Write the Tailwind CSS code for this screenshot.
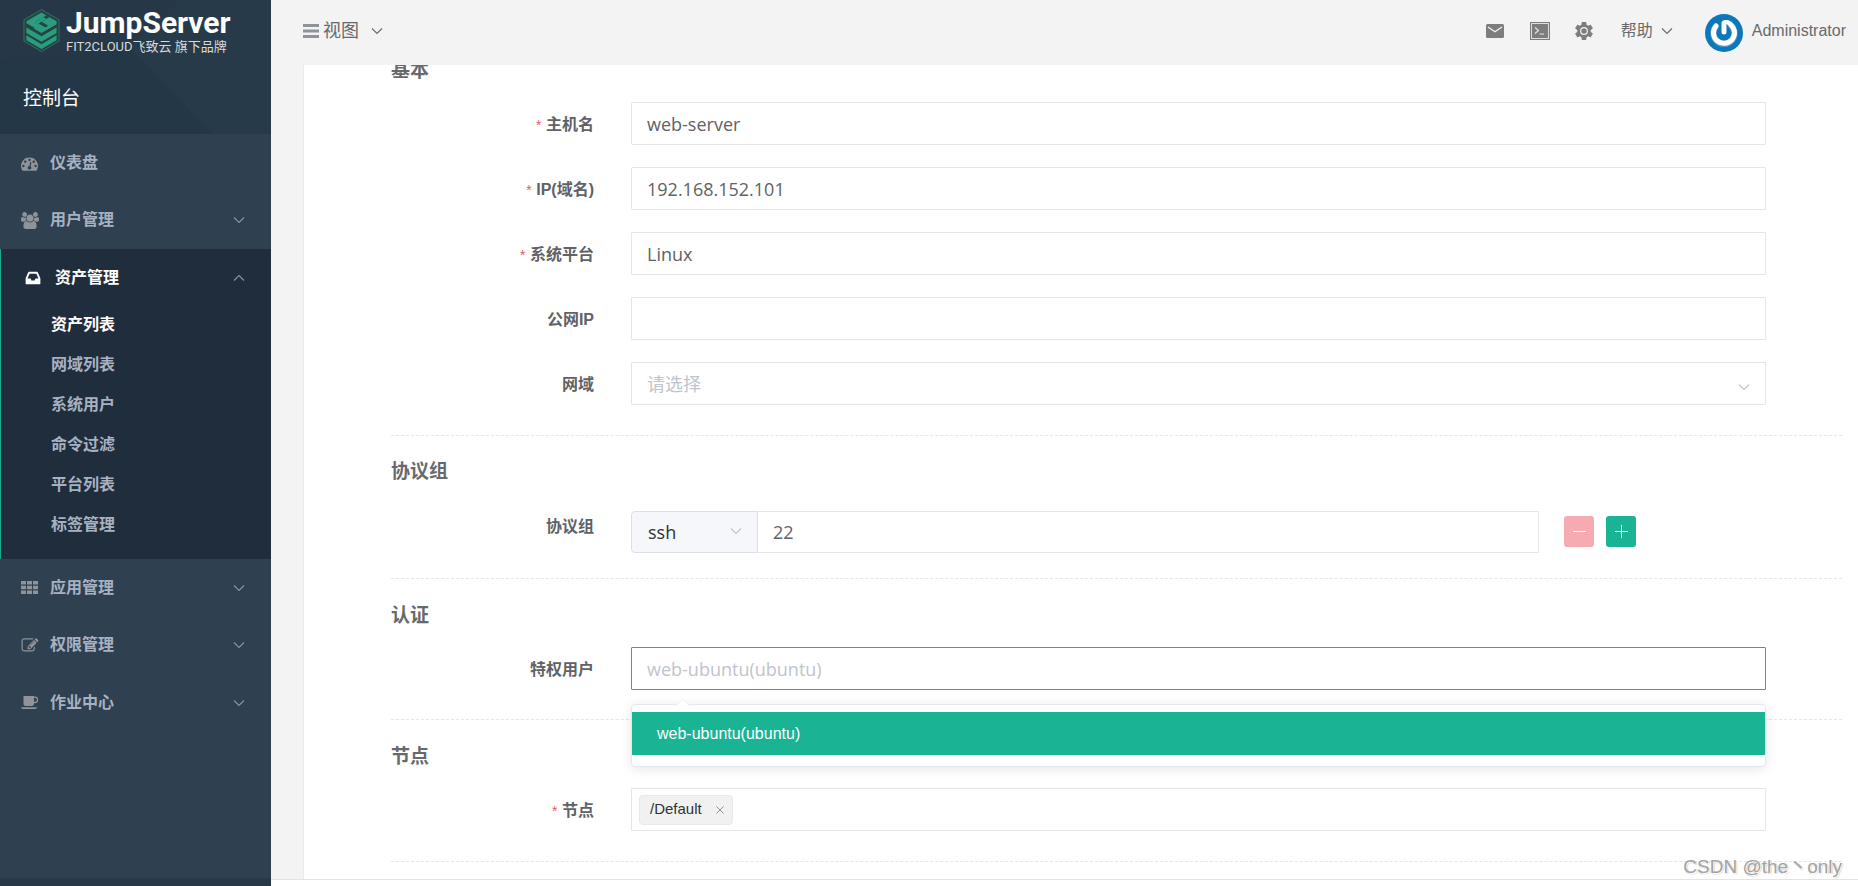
<!DOCTYPE html>
<html lang="zh-CN">
<head>
<meta charset="utf-8">
<title>JumpServer</title>
<script src="https://cdn.jsdelivr.net/npm/@tailwindcss/browser@4"></script>
</head>
<body class="flex h-screen overflow-hidden bg-[#f3f3f3] font-['Liberation_Sans','Noto_Sans_CJK_SC',sans-serif] text-base text-[#606266]">

<svg class="hidden" aria-hidden="true">
  <symbol id="down" viewBox="0 0 12 8"><path d="M1 1.5 6 6.5 11 1.5" fill="none" stroke="currentColor" stroke-width="1.1"/></symbol>
  <symbol id="up" viewBox="0 0 12 8"><path d="M1 6.5 6 1.5 11 6.5" fill="none" stroke="currentColor" stroke-width="1.1"/></symbol>
</svg>

<aside class="flex w-[271px] shrink-0 flex-col bg-[#2f4050]">
  <div class="relative h-[134px] overflow-hidden bg-[#263848] pl-[23px]">
    <svg class="absolute inset-0 h-full w-full" viewBox="0 0 271 134" preserveAspectRatio="none" aria-hidden="true">
      <path d="M130 48 212 134H271V0H180z" fill="#273a4a"/><path d="M0 60 130 48 212 134H0z" fill="#243747"/>
    </svg>
    <div class="relative flex gap-[6px] pt-2">
      <svg class="h-[45px] w-[37px] shrink-0" viewBox="0 0 38 45" aria-hidden="true">
        <path d="M19 1 37 11.500V33.500L19 44 1 33.500V11.500z" fill="#25443f" stroke="#2b7566" stroke-width="1"/>
        <path d="M3.500 13 19 4 24 7 12 14 19 18 14 21 3.500 15z" fill="#2a9c80"/>
        <path d="M24 7 34.500 13V16L19 25 11 20.500 14 18.500 19 21.500 26 17.500 19 13.500 27 9z" fill="#2a9c80"/>
        <path d="M12 14 21 9 24 10.500 16 15.200 24 20 19 23 13 19.500 17 17z" fill="#2a9c80"/>
        <path d="M3.500 19.500V25L19 34 34.500 25V19.500L19 28.500z" fill="#2a9c80"/>
        <path d="M3.500 27.500V32.500L19 41.500 34.500 32.500V27.500L19 36.500z" fill="#2a9c80"/>
      </svg>
      <div class="text-white">
        <div class="h-[29px] font-[Roboto] text-[30px] leading-[29px] font-bold">JumpServer</div>
        <div class="whitespace-nowrap font-['Roboto','Noto_Sans_CJK_SC',sans-serif] text-[13px] leading-[19px] text-[#d5dade]">FIT2CLOUD飞致云 旗下品牌</div>
      </div>
    </div>
    <h1 class="relative pt-[27px] font-['Noto_Sans_CJK_SC'] text-[19px] leading-7 text-white">控制台</h1>
  </div>

  <nav class="flex flex-1 flex-col font-bold text-[#a7b1c2]">
    <a href="#" class="flex h-[57px] items-center pt-px pl-[21px]">
      <svg class="h-[17px] w-[17px] text-[#909399]" viewBox="0 0 1792 1792" fill="currentColor"><path d="M384 1152q0-53-37.500-90.500t-90.500-37.500-90.500 37.500-37.500 90.500 37.500 90.500 90.500 37.500 90.500-37.500 37.500-90.500zm192-448q0-53-37.500-90.500t-90.500-37.500-90.500 37.500-37.500 90.500 37.500 90.500 90.500 37.500 90.500-37.500 37.500-90.500zm428 481l101-382q6-26-7.500-48.500t-38.500-29.500-48 6.500-30 39.500l-101 382q-60 5-107 43.500t-63 98.500q-20 77 20 146t117 89 146-20 89-117q16-60-6-117t-72-91zm660-33q0-53-37.500-90.500t-90.500-37.500-90.500 37.500-37.500 90.500 37.500 90.500 90.500 37.500 90.500-37.500 37.500-90.500zm-640-640q0-53-37.500-90.500t-90.500-37.500-90.500 37.500-37.500 90.500 37.500 90.500 90.500 37.500 90.500-37.500 37.500-90.500zm448 192q0-53-37.500-90.500t-90.500-37.500-90.500 37.500-37.500 90.500 37.500 90.500 90.500 37.500 90.500-37.500 37.500-90.500zm320 448q0 261-141 483-19 29-54 29h-1402q-35 0-54-29-141-221-141-483 0-182 71-348t191-286 286-191 348-71 348 71 286 191 191 286 71 348z"/></svg>
      <span class="ml-3">仪表盘</span>
    </a>
    <button type="button" class="flex h-[58px] items-center pr-[26px] pl-[21px]">
      <svg class="h-[17px] w-[18px] text-[#909399]" viewBox="0 0 1920 1792" fill="currentColor"><path d="M593 896q-162 5-265 128h-134q-82 0-138-40.500t-56-118.500q0-353 124-353 6 0 43.500 21t97.500 42.500 119 21.500q67 0 133-23-5 37-5 66 0 139 81 256zm1071 637q0 120-73 189.500t-194 69.500h-874q-121 0-194-69.500t-73-189.500q0-53 3.500-103.500t14-109 26.500-108.500 43-97.500 62-81 85.500-53.500 111.500-20q10 0 43 21.500t73 48 107 48 135 21.500 135-21.500 107-48 73-48 43-21.500q61 0 111.500 20t85.500 53.500 62 81 43 97.500 26.500 108.500 14 109 3.500 103.500zm-1024-1277q0 106-75 181t-181 75-181-75-75-181 75-181 181-75 181 75 75 181zm704 384q0 159-112.500 271.500t-271.500 112.500-271.500-112.500-112.500-271.500 112.500-271.500 271.500-112.500 271.500 112.500 112.500 271.500zm576 225q0 78-56 118.500t-138 40.500h-134q-103-123-265-128 81-117 81-256 0-29-5-66 66 23 133 23 59 0 119-21.500t97.500-42.500 43.500-21q124 0 124 353zm-128-609q0 106-75 181t-181 75-181-75-75-181 75-181 181-75 181 75 75 181z"/></svg>
      <span class="ml-[11px]">用户管理</span>
      <svg class="ml-auto h-2 w-3 text-[#909399]"><use href="#down"/></svg>
    </button>

    <div class="border-l border-[#19aa8d] bg-[#202d3d] pb-[14px]">
      <button type="button" class="flex h-14 w-full items-center pt-px pr-[26px] pl-6 text-white">
        <svg class="h-4 w-4" viewBox="-64 128 1664 1536" fill="currentColor"><path d="M1023 960h316q-1-3-2.500-8.500t-2.500-7.500l-212-496h-708l-212 496q-1 3-2.500 8.500t-2.500 7.500h316l95 192h320zm513 30v482q0 26-19 45t-45 19h-1408q-26 0-45-19t-19-45v-482q0-62 25-123l238-552q10-25 36.500-42t52.500-17h832q26 0 52.500 17t36.500 42l238 552q25 61 25 123z"/></svg>
        <span class="ml-[14px]">资产管理</span>
        <svg class="ml-auto h-2 w-3 text-[#909399]"><use href="#up"/></svg>
      </button>
      <ul class="pl-[50px] leading-10">
        <li><a href="#" class="block text-white">资产列表</a></li>
        <li><a href="#" class="block">网域列表</a></li>
        <li><a href="#" class="block">系统用户</a></li>
        <li><a href="#" class="block">命令过滤</a></li>
        <li><a href="#" class="block">平台列表</a></li>
        <li><a href="#" class="block">标签管理</a></li>
      </ul>
    </div>

    <button type="button" class="flex h-[57px] items-center pr-[26px] pl-[21px]">
      <svg class="h-[15px] w-[18px] text-[#909399]" viewBox="0 0 18 15" fill="currentColor"><path d="M0 1h5v3.500H0zM6 1h5v3.500H6zM12 1H17v3.500h-5zM0 5.700h5v3.600H0zM6 5.700h5v3.600H6zM12 5.700H17v3.600h-5zM0 10.500h5V14H0zM6 10.500h5V14H6zM12 10.500H17V14h-5z"/></svg>
      <span class="ml-[11px]">应用管理</span>
      <svg class="ml-auto h-2 w-3 text-[#909399]"><use href="#down"/></svg>
    </button>
    <button type="button" class="flex h-[58px] items-center pr-[26px] pl-[21px]">
      <svg class="h-[17px] w-[18px] text-[#909399]" viewBox="0 0 1792 1792" fill="currentColor"><path d="M888 1184l116-116-152-152-116 116v56h96v96h56zm440-720q-16-16-33 1l-350 350q-17 17-1 33t33-1l350-350q17-17 1-33zm80 594v190q0 119-84.500 203.500t-203.500 84.500h-832q-119 0-203.500-84.500t-84.500-203.500v-832q0-119 84.500-203.500t203.500-84.500h832q63 0 117 25 15 7 18 23 3 17-9 29l-49 49q-14 14-32 8-23-6-45-6h-832q-66 0-113 47t-47 113v832q0 66 47 113t113 47h832q66 0 113-47t47-113v-126q0-13 9-22l64-64q15-15 35-7t20 29zm-96-738l288 288-672 672h-288v-288zm444 132l-92 92-288-288 92-92q28-28 68-28t68 28l152 152q28 28 28 68t-28 68z"/></svg>
      <span class="ml-[11px]">权限管理</span>
      <svg class="ml-auto h-2 w-3 text-[#909399]"><use href="#down"/></svg>
    </button>
    <button type="button" class="flex h-[57px] items-center pr-[26px] pl-[21px]">
      <svg class="h-[15px] w-[18px] text-[#909399]" viewBox="0 0 18 15"><path d="M2.500 1H13V8.500Q13 11 10.500 11H5Q2.500 11 2.500 8.500zM0 12.300H16Q16 14 14 14H2Q0 14 0 12.300z" fill="currentColor"/><path d="M12.800 2.200H14Q16.500 2.200 16.500 4.700 16.500 7.500 14 7.500H12.800" fill="none" stroke="currentColor" stroke-width="1.300"/></svg>
      <span class="ml-[11px]">作业中心</span>
      <svg class="ml-auto h-2 w-3 text-[#909399]"><use href="#down"/></svg>
    </button>
    <div class="mt-auto h-2 bg-[#293846]"></div>
  </nav>
</aside>

<div class="flex min-w-0 flex-1 flex-col">
  <header class="flex h-[65px] shrink-0 items-center bg-[#f3f3f3] pr-3 pb-[3px] pl-8 text-[#676a6c]">
    <button type="button" class="flex items-center">
      <svg class="h-[14px] w-4" viewBox="0 0 16 14" fill="#909399"><path d="M0 0h16v3H0zM0 5.500h16v3H0zM0 11h16v3H0z"/></svg>
      <span class="ml-1 text-[18px]">视图</span>
      <svg class="ml-3 h-2 w-3"><use href="#down"/></svg>
    </button>
    <div class="ml-auto flex items-center">
      <button type="button" aria-label="邮件"><svg class="h-[14px] w-[18px]" viewBox="0 0 18 14"><rect width="18" height="14" rx="1.500" fill="#7b7d7f"/><path d="M2 3 9 7.800 16 3" fill="none" stroke="#f3f3f3" stroke-width="1.300"/></svg></button>
      <button type="button" class="ml-[26px]" aria-label="终端"><svg class="h-[18px] w-5" viewBox="0 0 20 18"><rect width="20" height="18" fill="#7b7d7f"/><rect x="1.500" y="1.500" width="17" height="15" fill="none" stroke="#dedede"/><path d="M5 5.500 8.500 8.500 5 11.500M9.500 12H14" fill="none" stroke="#e4e4e4" stroke-width="1.200"/></svg></button>
      <button type="button" class="ml-[25px]" aria-label="设置"><svg class="h-[18px] w-[18px]" viewBox="2 2 20 20" fill="#7b7d7f"><path d="M19.430 12.980c.04-.32.07-.64.07-.98s-.03-.66-.07-.98l2.110-1.650c.19-.15.24-.42.12-.64l-2-3.460c-.12-.22-.39-.3-.61-.22l-2.490 1c-.52-.4-1.080-.73-1.690-.98l-.38-2.650C14.460 2.180 14.250 2 14 2h-4c-.25 0-.46.18-.49.42l-.38 2.650c-.61.25-1.170.59-1.690.98l-2.490-1c-.23-.09-.49 0-.61.22l-2 3.460c-.13.22-.07.49.12.64l2.110 1.650c-.04.32-.07.65-.07.98s.03.66.07.98l-2.110 1.650c-.19.15-.24.42-.12.64l2 3.460c.12.22.39.3.61.22l2.490-1c.52.4 1.080.73 1.690.98l.38 2.650c.03.24.24.42.49.42h4c.25 0 .46-.18.49-.42l.38-2.650c.61-.25 1.170-.59 1.690-.98l2.490 1c.23.09.49 0 .61-.22l2-3.460c.12-.22.07-.49-.12-.64z"/><circle cx="12" cy="12" r="3.700" fill="none" stroke="#f3f3f3" stroke-width="1.300"/></svg></button>
      <button type="button" class="ml-[28px] flex items-center"><span>帮助</span><svg class="ml-2 h-2 w-3"><use href="#down"/></svg></button>
      <a href="#" class="ml-8 flex items-center">
        <svg class="mt-1 h-[38px] w-[38px]" viewBox="0 0 38 38" aria-hidden="true"><circle cx="19" cy="19" r="19" fill="#0b78bc"/><path d="M11 12.500A10.500 10.500 0 1 0 26 11.500" fill="none" stroke="#5c93b9" stroke-width="6.500" stroke-linecap="round"/><path d="M11 12A10.500 10.500 0 1 0 26 11M19 9V18" fill="none" stroke="#fff" stroke-width="5" stroke-linecap="round"/><path d="M18.500 6H23Q26 7 28 9.500L25 12.500 21.500 10z" fill="#fff"/></svg>
        <span class="ml-[9px]">Administrator</span>
      </a>
    </div>
  </header>

  <main class="min-h-0 flex-1 overflow-hidden pl-8">
    <form class="flow-root h-full border-l border-[#e7eaec] bg-white pr-4 pl-[87px]">
      <section class="-mt-[7px] border-b border-dashed border-[#e4e6e8] pb-[30px]">
        <h2 class="text-[19px] leading-[26px] font-bold text-[#676a6c]">基本</h2>
        <div class="mt-[18px] flex flex-col gap-[22px] pr-[76px]">
          <div class="flex items-center">
            <label for="host" class="w-[203px] shrink-0 pt-[3px] text-right font-bold"><span class="text-sm font-normal text-[#ed5565]">*</span> 主机名</label>
            <input id="host" value="web-server" class="ml-[37px] h-[43px] min-w-0 flex-1 rounded-[1px] border border-[#e5e6e7] px-[15px] font-['Open_Sans'] text-[18px] outline-none">
          </div>
          <div class="flex items-center">
            <label for="ip" class="w-[203px] shrink-0 pt-[3px] text-right font-bold"><span class="text-sm font-normal text-[#ed5565]">*</span> IP(域名)</label>
            <input id="ip" value="192.168.152.101" class="ml-[37px] h-[43px] min-w-0 flex-1 rounded-[1px] border border-[#e5e6e7] px-[15px] font-['Open_Sans'] text-[18px] outline-none">
          </div>
          <div class="flex items-center">
            <label for="platform" class="w-[203px] shrink-0 pt-[3px] text-right font-bold"><span class="text-sm font-normal text-[#ed5565]">*</span> 系统平台</label>
            <input id="platform" value="Linux" class="ml-[37px] h-[43px] min-w-0 flex-1 rounded-[1px] border border-[#e5e6e7] px-[15px] font-['Open_Sans'] text-[18px] outline-none">
          </div>
          <div class="flex items-center">
            <label for="public" class="w-[203px] shrink-0 pt-[3px] text-right font-bold">公网IP</label>
            <input id="public" class="ml-[37px] h-[43px] min-w-0 flex-1 rounded-[1px] border border-[#e5e6e7] px-[15px] font-['Open_Sans'] text-[18px] outline-none">
          </div>
          <div class="flex items-center">
            <label for="domain" class="w-[203px] shrink-0 pt-[3px] text-right font-bold">网域</label>
            <div class="relative ml-[37px] min-w-0 flex-1">
              <select id="domain" class="block h-[43px] w-full appearance-none rounded-[1px] border border-[#e5e6e7] px-[15px] pt-[3px] text-[18px] text-[#c0c4cc] outline-none"><option>请选择</option></select>
              <svg class="pointer-events-none absolute top-[21px] right-4 h-2 w-3 text-[#c0c4cc]"><use href="#down"/></svg>
            </div>
          </div>
        </div>
      </section>

      <section class="border-b border-dashed border-[#e4e6e8] pt-[23px] pb-[25px]">
        <h2 class="text-[19px] leading-[26px] font-bold text-[#676a6c]">协议组</h2>
        <div class="mt-[26px] flex items-start pr-[76px]">
          <label for="port" class="w-[203px] shrink-0 pt-1 text-right font-bold">协议组</label>
          <div class="ml-[37px] flex min-w-0 flex-1 items-center">
            <div class="flex h-[42px] w-4/5">
              <div class="relative w-[127px] shrink-0">
                <select aria-label="协议" class="h-[42px] w-full appearance-none rounded-l border border-[#dcdfe6] bg-[#f5f7fa] px-4 font-['Open_Sans'] text-[18px] text-[#303133] outline-none"><option>ssh</option></select>
                <svg class="pointer-events-none absolute top-4 right-4 h-2 w-3 text-[#c0c4cc]"><use href="#down"/></svg>
              </div>
              <input id="port" value="22" class="min-w-0 flex-1 rounded-r-[1px] border border-l-0 border-[#e5e6e7] px-[15px] font-['Open_Sans'] text-[18px] outline-none">
            </div>
            <button type="button" aria-label="删除" class="mb-px ml-[25px] flex h-[31px] w-[30px] items-center justify-center rounded-[3px] bg-[#f6aab2]"><svg class="h-[13px] w-[13px]" viewBox="0 0 13 13"><path d="M0 6.500h13" stroke="#fff"/></svg></button>
            <button type="button" aria-label="添加" class="mb-px ml-3 flex h-[31px] w-[30px] items-center justify-center rounded-[3px] bg-[#1ab394]"><svg class="h-[13px] w-[13px]" viewBox="0 0 13 13"><path d="M0 6.500h13M6.500 0v13" stroke="#fff"/></svg></button>
          </div>
        </div>
      </section>

      <section class="border-b border-dashed border-[#e4e6e8] pt-[24px] pb-[29px]">
        <h2 class="text-[19px] leading-[26px] font-bold text-[#676a6c]">认证</h2>
        <div class="mt-[18px] flex items-center pr-[76px]">
          <label for="admin" class="w-[203px] shrink-0 pt-[3px] text-right font-bold">特权用户</label>
          <div class="relative ml-[37px] min-w-0 flex-1">
            <input id="admin" placeholder="web-ubuntu(ubuntu)" class="block h-[43px] w-full rounded-[1px] border border-[#1ab394] px-[15px] font-['Open_Sans'] text-[18px] outline-none placeholder:text-[#c0c4cc]">
            <div class="absolute inset-x-0 top-full z-10 mt-[14px] rounded border border-[#e4e7ed] bg-white pt-[7px] pb-[11px] shadow-[0_2px_12px_rgba(0,0,0,0.1)]" role="listbox">
              <svg class="absolute -top-[7px] left-[44px] h-2 w-[14px]" viewBox="0 0 14 8" aria-hidden="true"><path d="M0 8 7 1 14 8" fill="#fff" stroke="#ebeef5"/></svg>
              <div role="option" aria-selected="true" class="h-[43px] bg-[#1ab394] px-[25px] leading-[43px] text-white">web-ubuntu(ubuntu)</div>
            </div>
          </div>
        </div>
      </section>

      <section class="border-b border-dashed border-[#e4e6e8] pt-[24px] pb-[30px]">
        <h2 class="text-[19px] leading-[26px] font-bold text-[#676a6c]">节点</h2>
        <div class="mt-[18px] flex items-center pr-[76px]">
          <label for="node" class="w-[203px] shrink-0 pt-[3px] text-right font-bold"><span class="text-sm font-normal text-[#ed5565]">*</span> 节点</label>
          <div class="ml-[37px] flex h-[43px] min-w-0 flex-1 items-center rounded-[1px] border border-[#e5e6e7] pl-[7px]">
            <span class="flex h-[30px] items-center rounded border border-[#e7eaec] bg-[#f1f1f1] pr-2 pl-[10px] text-[15px] text-[#303133]">/Default
              <button type="button" aria-label="移除" class="ml-[14px]"><svg class="h-2 w-2" viewBox="0 0 9 9"><path d="M.5.5l8 8M8.500.5l-8 8" stroke="#85878a"/></svg></button>
            </span>
            <input id="node" aria-label="节点" class="ml-2 min-w-0 flex-1 outline-none">
          </div>
        </div>
      </section>
    </form>
  </main>
  <footer class="relative h-[7px] shrink-0 border-t border-[#e2e3e5] bg-white">
    <div class="absolute right-4 bottom-[7px] z-20 text-[19px] leading-6 whitespace-nowrap text-[#a4a4a4] [text-shadow:1px_1px_0_#fff,1px_1px_1px_#777]">CSDN @the丶only</div>
  </footer>
</div>
</body>
</html>
